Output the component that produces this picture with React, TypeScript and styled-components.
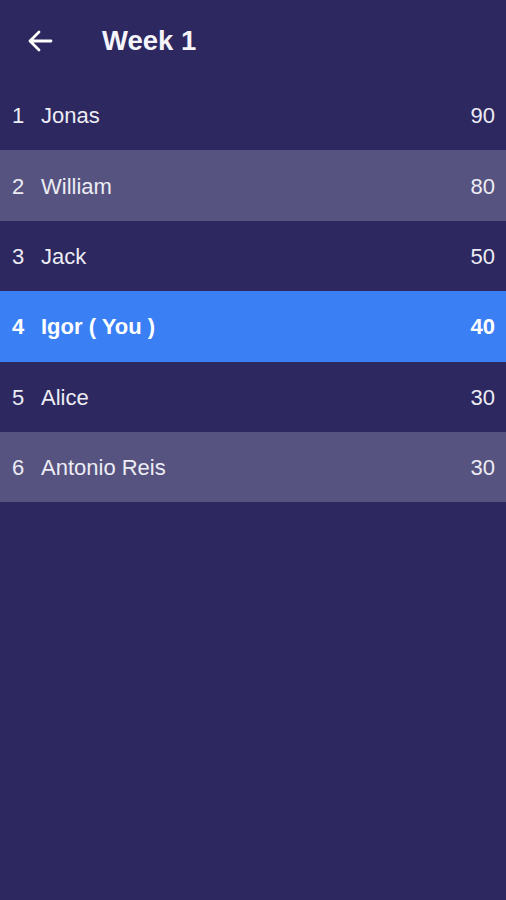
import styled, { createGlobalStyle } from "styled-components";

type Player = {
  rank: number;
  name: string;
  score: number;
  me?: boolean;
};

const players: Player[] = [
  { rank: 1, name: "Jonas", score: 90 },
  { rank: 2, name: "William", score: 80 },
  { rank: 3, name: "Jack", score: 50 },
  { rank: 4, name: "Igor ( You )", score: 40, me: true },
  { rank: 5, name: "Alice", score: 30 },
  { rank: 6, name: "Antonio Reis", score: 30 },
];

const GlobalStyle = createGlobalStyle`
  html, body {
    margin: 0;
    padding: 0;
    background-color: #2d2860;
  }
  body {
    font-family: "Liberation Sans", Arial, Helvetica, sans-serif;
  }
`;

const Screen = styled.div`
  width: 100%;
  min-height: 900px;
  display: flex;
  flex-direction: column;
  background-color: #2d2860;
  color: #ececf4;
`;

const Header = styled.div`
  display: flex;
  align-items: center;
  height: 80px;
  padding: 2px 0 0 26px;
  box-sizing: border-box;
`;

const BackBtn = styled.button`
  display: flex;
  align-items: center;
  justify-content: center;
  width: 28px;
  height: 28px;
  padding: 0;
  margin-right: 48px;
  border: 0;
  background: transparent;
  color: #ffffff;
  cursor: pointer;
`;

const Title = styled.h1`
  margin: 0;
  font-size: 27.5px;
  font-weight: 700;
  color: #f4f4fa;
`;

const List = styled.div`
  display: flex;
  flex-direction: column;
`;

const Row = styled.div<{ $variant: "plain" | "alt" | "me" }>`
  display: flex;
  align-items: center;
  height: 70.4px;
  padding: 2px 11px 0 12px;
  box-sizing: border-box;
  font-size: 22px;
  font-weight: ${(p) => (p.$variant === "me" ? 700 : 400)};
  color: ${(p) => (p.$variant === "me" ? "#ffffff" : "#ececf4")};
  background-color: ${(p) =>
    p.$variant === "me" ? "#3a80f4" : p.$variant === "alt" ? "#575380" : "transparent"};
`;

const Rank = styled.span`
  width: 29px;
`;

const Name = styled.span`
  flex: 1;
`;

const Score = styled.span`
  text-align: right;
`;

const BackArrow = () => (
  <svg width="26" height="24" viewBox="0 0 26 24" fill="none">
    <path
      d="M24 12H3M12 3L3 12L12 21"
      stroke="currentColor"
      strokeWidth="2.8"
      strokeLinecap="round"
      strokeLinejoin="round"
    />
  </svg>
);

const App = () => {
  return (
    <Screen>
      <GlobalStyle />
      <Header>
        <BackBtn aria-label="back">
          <BackArrow />
        </BackBtn>
        <Title>Week 1</Title>
      </Header>
      <List>
        {players.map((p) => (
          <Row key={p.rank} $variant={p.me ? "me" : p.rank % 2 === 0 ? "alt" : "plain"}>
            <Rank>{p.rank}</Rank>
            <Name>{p.name}</Name>
            <Score>{p.score}</Score>
          </Row>
        ))}
      </List>
    </Screen>
  );
};

export default App;
